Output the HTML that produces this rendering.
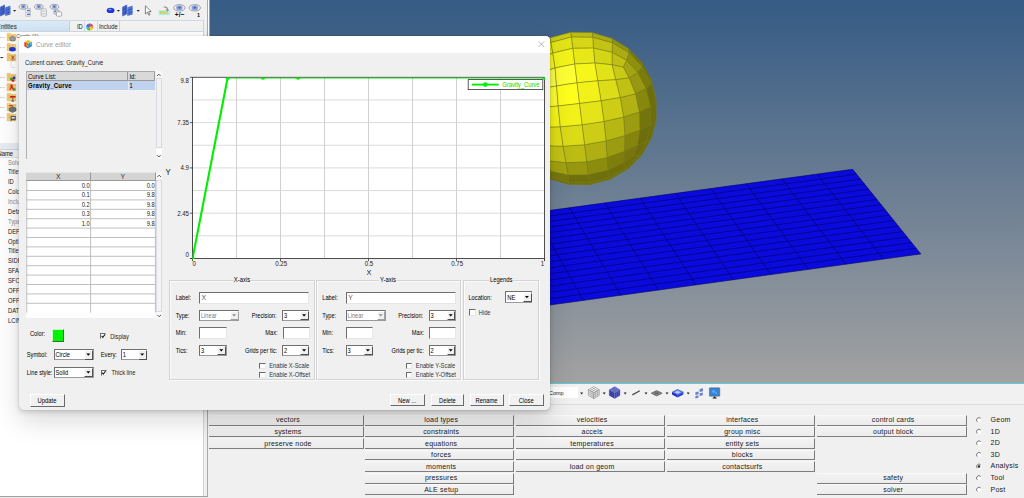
<!DOCTYPE html><html><head><meta charset="utf-8"><title>Curve editor</title><style>
html,body{margin:0;padding:0;}
body{width:1024px;height:498px;overflow:hidden;position:relative;background:#f0f0f0;font-family:"Liberation Sans",sans-serif;}
.t{position:absolute;white-space:nowrap;line-height:12px;font-family:"Liberation Sans",sans-serif;transform:scaleY(1.1);}
div{box-sizing:border-box;}
#root{position:absolute;left:0;top:0;width:1024px;height:498px;overflow:hidden;background:#f0f0f0;}
svg{position:absolute;left:0;top:0;overflow:visible;}
.btn{position:absolute;background:#f1f1f1;border-top:1px solid #fdfdfd;border-left:1px solid #fdfdfd;border-right:1.1px solid #6a6a6a;border-bottom:1.2px solid #6a6a6a;}
.pb{position:absolute;background:linear-gradient(#f3f3f3,#ececec);border-right:1px solid #7a7a7a;border-bottom:1.4px solid #7e7e7e;border-top:1px solid #f8f8f8;}
.inp{position:absolute;background:#fff;border-top:1px solid #6e6e6e;border-left:1px solid #6e6e6e;border-right:1px solid #e6e6e6;border-bottom:1px solid #e6e6e6;}
.grp{position:absolute;border:1px solid #d3d3d3;box-shadow:inset 1px 1px 0 #fbfbfb, 1px 1px 0 #fbfbfb;}
</style></head><body><div id="root"><div style="position:absolute;left:210.00px;top:0.00px;width:814.00px;height:383.00px;background:linear-gradient(to bottom,#375c85 0%,#375c85 2%,#a2a2a2 100%);"></div><svg width="1024" height="498" viewBox="0 0 1024 498"><polygon points="852.7,169.3 920.8,253.9 470.8,315.9 427.9,227.0" fill="#0a0adc"/><path d="M852.7,169.3L920.8,253.9M817.3,174.1L883.3,259.1M781.9,178.9L845.8,264.2M746.5,183.7L808.3,269.4M711.1,188.5L770.8,274.6M675.7,193.4L733.3,279.8M640.3,198.2L695.8,284.9M604.9,203.0L658.3,290.1M569.5,207.8L620.8,295.3M534.1,212.6L583.3,300.4M498.7,217.4L545.8,305.6M463.3,222.2L508.3,310.8M427.9,227.0L470.8,315.9M852.7,169.3L427.9,227.0M856.6,174.2L430.4,232.2M860.6,179.1L432.9,237.4M864.6,184.1L435.4,242.6M868.7,189.2L438.0,247.9M872.8,194.3L440.6,253.3M877.0,199.4L443.2,258.7M881.2,204.6L445.8,264.2M885.4,209.9L448.5,269.7M889.7,215.2L451.2,275.3M894.0,220.6L453.9,280.9M898.3,226.0L456.7,286.6M902.8,231.5L459.4,292.4M907.2,237.0L462.2,298.2M911.7,242.6L465.1,304.0M916.2,248.2L467.9,310.0M920.8,253.9L470.8,315.9" stroke="#04045e" stroke-width="0.6" fill="none"/><g stroke="#7a7a12" stroke-width="0.5" stroke-linejoin="round"><polygon points="504.5,96.5 504.4,115.4 505.0,120.1 505.1,101.1" fill="rgb(175,175,19)"/><polygon points="650.9,78.5 655.6,96.9 656.2,101.6 651.5,83.1" fill="rgb(109,109,11)"/><polygon points="509.5,78.3 504.5,96.5 505.1,101.1 510.0,82.7" fill="rgb(193,193,21)"/><polygon points="641.7,62.1 650.9,78.5 651.5,83.1 642.2,66.5" fill="rgb(109,109,11)"/><polygon points="568.4,184.4 589.7,184.8 589.4,182.8 568.8,182.6" fill="rgb(111,111,12)"/><polygon points="589.7,184.8 610.2,179.3 609.4,177.6 589.4,182.8" fill="rgb(111,111,12)"/><polygon points="548.6,178.6 568.4,184.4 568.8,182.6 550.1,177.4" fill="rgb(111,111,12)"/><polygon points="610.2,179.3 628.0,168.9 626.2,168.0 609.4,177.6" fill="rgb(111,111,12)"/><polygon points="532.0,168.4 548.6,178.6 550.1,177.4 535.4,168.7" fill="rgb(111,111,12)"/><polygon points="628.0,168.9 641.7,155.0 638.4,156.0 626.2,168.0" fill="rgb(111,111,12)"/><polygon points="518.9,62.0 509.5,78.3 510.0,82.7 519.4,66.3" fill="rgb(205,205,22)"/><polygon points="628.6,48.6 641.7,62.1 642.2,66.5 629.1,52.8" fill="rgb(118,118,13)"/><polygon points="518.9,154.9 532.0,168.4 535.4,168.7 524.3,156.9" fill="rgb(134,134,14)"/><polygon points="651.1,138.7 641.7,155.0 638.4,156.0 646.3,142.0" fill="rgb(109,109,11)"/><polygon points="518.9,62.0 532.6,48.1 533.1,52.6 519.4,66.3" fill="rgb(206,206,22)"/><polygon points="612.0,38.4 628.6,48.6 629.1,52.8 612.5,42.9" fill="rgb(147,147,16)"/><polygon points="509.7,138.5 518.9,154.9 524.3,156.9 516.1,141.7" fill="rgb(159,159,17)"/><polygon points="656.1,120.5 651.1,138.7 646.3,142.0 650.6,125.2" fill="rgb(109,109,11)"/><polygon points="532.6,48.1 550.4,37.7 550.9,42.5 533.1,52.6" fill="rgb(207,207,22)"/><polygon points="592.2,32.6 612.0,38.4 612.5,42.9 592.8,37.3" fill="rgb(169,169,18)"/><polygon points="550.4,37.7 570.9,32.2 571.5,37.1 550.9,42.5" fill="rgb(200,200,22)"/><polygon points="570.9,32.2 592.2,32.6 592.8,37.3 571.5,37.1" fill="rgb(187,187,20)"/><polygon points="505.0,120.1 509.7,138.5 516.1,141.7 511.7,123.8" fill="rgb(183,183,20)"/><polygon points="656.2,101.6 656.1,120.5 650.6,125.2 650.5,106.8" fill="rgb(109,109,11)"/><polygon points="505.1,101.1 505.0,120.1 511.7,123.8 511.6,105.1" fill="rgb(204,204,22)"/><polygon points="651.5,83.1 656.2,101.6 650.5,106.8 646.1,88.6" fill="rgb(109,109,11)"/><polygon points="535.4,168.7 550.1,177.4 550.8,171.3 539.4,166.7" fill="rgb(130,130,14)"/><polygon points="626.2,168.0 638.4,156.0 634.0,155.1 624.1,162.3" fill="rgb(111,111,12)"/><polygon points="510.0,82.7 505.1,101.1 511.6,105.1 515.8,87.5" fill="rgb(219,219,24)"/><polygon points="524.3,156.9 535.4,168.7 539.4,166.7 533.7,158.0" fill="rgb(157,157,17)"/><polygon points="642.2,66.5 651.5,83.1 646.1,88.6 637.8,72.5" fill="rgb(124,124,13)"/><polygon points="646.3,142.0 638.4,156.0 634.0,155.1 637.4,145.2" fill="rgb(109,109,11)"/><polygon points="550.1,177.4 568.8,182.6 568.3,175.0 550.8,171.3" fill="rgb(120,120,13)"/><polygon points="609.4,177.6 626.2,168.0 624.1,162.3 608.0,170.1" fill="rgb(111,111,12)"/><polygon points="568.8,182.6 589.4,182.8 588.4,174.8 568.3,175.0" fill="rgb(111,111,12)"/><polygon points="589.4,182.8 609.4,177.6 608.0,170.1 588.4,174.8" fill="rgb(111,111,12)"/><polygon points="519.4,66.3 510.0,82.7 515.8,87.5 523.6,72.9" fill="rgb(230,230,25)"/><polygon points="629.1,52.8 642.2,66.5 637.8,72.5 626.6,60.2" fill="rgb(144,144,15)"/><polygon points="519.4,66.3 533.1,52.6 535.9,61.7 523.6,72.9" fill="rgb(230,230,25)"/><polygon points="612.5,42.9 629.1,52.8 626.6,60.2 612.0,52.3" fill="rgb(172,172,18)"/><polygon points="516.1,141.7 524.3,156.9 533.7,158.0 527.6,143.8" fill="rgb(181,181,19)"/><polygon points="650.6,125.2 646.3,142.0 637.4,145.2 639.9,130.0" fill="rgb(109,109,11)"/><polygon points="533.1,52.6 550.9,42.5 552.8,53.1 535.9,61.7" fill="rgb(232,232,25)"/><polygon points="592.8,37.3 612.5,42.9 612.0,52.3 593.4,48.1" fill="rgb(195,195,21)"/><polygon points="533.7,158.0 547.7,160.7 550.8,171.3 539.4,166.7" fill="rgb(167,167,18)"/><polygon points="624.5,151.3 637.4,145.2 634.0,155.1 624.1,162.3" fill="rgb(117,117,12)"/><polygon points="550.9,42.5 571.5,37.1 572.9,48.3 552.8,53.1" fill="rgb(227,227,25)"/><polygon points="571.5,37.1 592.8,37.3 593.4,48.1 572.9,48.3" fill="rgb(215,215,23)"/><polygon points="511.7,123.8 516.1,141.7 527.6,143.8 523.7,126.2" fill="rgb(205,205,22)"/><polygon points="650.5,106.8 650.6,125.2 639.9,130.0 639.4,112.0" fill="rgb(116,116,12)"/><polygon points="511.6,105.1 511.7,123.8 523.7,126.2 523.1,107.6" fill="rgb(226,226,24)"/><polygon points="646.1,88.6 650.5,106.8 639.4,112.0 635.5,93.8" fill="rgb(135,135,14)"/><polygon points="547.7,160.7 566.1,162.6 568.3,175.0 550.8,171.3" fill="rgb(162,162,17)"/><polygon points="607.1,157.6 624.5,151.3 624.1,162.3 608.0,170.1" fill="rgb(126,126,13)"/><polygon points="515.8,87.5 511.6,105.1 523.1,107.6 525.4,90.6" fill="rgb(239,239,26)"/><polygon points="637.8,72.5 646.1,88.6 635.5,93.8 629.2,77.9" fill="rgb(151,151,16)"/><polygon points="523.6,72.9 515.8,87.5 525.4,90.6 528.6,78.8" fill="rgb(245,245,26)"/><polygon points="626.6,60.2 637.8,72.5 629.2,77.9 623.2,67.2" fill="rgb(164,164,18)"/><polygon points="527.6,143.8 543.5,145.6 547.7,160.7 533.7,158.0" fill="rgb(193,193,21)"/><polygon points="624.9,135.6 639.9,130.0 637.4,145.2 624.5,151.3" fill="rgb(133,133,14)"/><polygon points="566.1,162.6 586.8,161.8 588.4,174.8 568.3,175.0" fill="rgb(152,152,16)"/><polygon points="586.8,161.8 607.1,157.6 608.0,170.1 588.4,174.8" fill="rgb(140,140,15)"/><polygon points="523.6,72.9 535.9,61.7 538.8,73.7 528.6,78.8" fill="rgb(244,244,26)"/><polygon points="612.0,52.3 626.6,60.2 623.2,67.2 612.0,64.7" fill="rgb(191,191,21)"/><polygon points="535.9,61.7 552.8,53.1 555.1,67.9 538.8,73.7" fill="rgb(248,248,31)"/><polygon points="593.4,48.1 612.0,52.3 612.0,64.7 594.8,63.0" fill="rgb(213,213,23)"/><polygon points="523.7,126.2 540.3,127.2 543.5,145.6 527.6,143.8" fill="rgb(219,219,24)"/><polygon points="623.6,117.0 639.4,112.0 639.9,130.0 624.9,135.6" fill="rgb(156,156,17)"/><polygon points="552.8,53.1 572.9,48.3 574.8,64.0 555.1,67.9" fill="rgb(244,244,26)"/><polygon points="572.9,48.3 593.4,48.1 594.8,63.0 574.8,64.0" fill="rgb(232,232,25)"/><polygon points="528.6,78.8 538.8,73.7 538.9,89.1 525.4,90.6" fill="rgb(255,255,41)"/><polygon points="612.0,64.7 623.2,67.2 629.2,77.9 615.7,79.7" fill="rgb(202,202,22)"/><polygon points="543.5,145.6 563.1,146.2 566.1,162.6 547.7,160.7" fill="rgb(195,195,21)"/><polygon points="606.0,140.9 624.9,135.6 624.5,151.3 607.1,157.6" fill="rgb(156,156,17)"/><polygon points="523.1,107.6 538.8,107.6 540.3,127.2 523.7,126.2" fill="rgb(240,240,26)"/><polygon points="620.2,97.6 635.5,93.8 639.4,112.0 623.6,117.0" fill="rgb(177,177,19)"/><polygon points="525.4,90.6 538.9,89.1 538.8,107.6 523.1,107.6" fill="rgb(252,252,27)"/><polygon points="615.7,79.7 629.2,77.9 635.5,93.8 620.2,97.6" fill="rgb(192,192,21)"/><polygon points="563.1,146.2 584.7,144.7 586.8,161.8 566.1,162.6" fill="rgb(188,188,20)"/><polygon points="584.7,144.7 606.0,140.9 607.1,157.6 586.8,161.8" fill="rgb(175,175,19)"/><polygon points="538.8,73.7 555.1,67.9 556.6,85.9 538.9,89.1" fill="rgb(255,255,72)"/><polygon points="594.8,63.0 612.0,64.7 615.7,79.7 597.7,80.8" fill="rgb(226,226,24)"/><polygon points="540.3,127.2 560.3,126.8 563.1,146.2 543.5,145.6" fill="rgb(224,224,24)"/><polygon points="604.0,121.4 623.6,117.0 624.9,135.6 606.0,140.9" fill="rgb(183,183,20)"/><polygon points="555.1,67.9 574.8,64.0 577.1,82.8 556.6,85.9" fill="rgb(255,255,53)"/><polygon points="574.8,64.0 594.8,63.0 597.7,80.8 577.1,82.8" fill="rgb(246,246,27)"/><polygon points="538.9,89.1 556.6,85.9 558.2,106.0 538.8,107.6" fill="rgb(255,255,50)"/><polygon points="597.7,80.8 615.7,79.7 620.2,97.6 601.0,100.8" fill="rgb(220,220,24)"/><polygon points="538.8,107.6 558.2,106.0 560.3,126.8 540.3,127.2" fill="rgb(246,246,27)"/><polygon points="601.0,100.8 620.2,97.6 623.6,117.0 604.0,121.4" fill="rgb(205,205,22)"/><polygon points="560.3,126.8 582.2,124.7 584.7,144.7 563.1,146.2" fill="rgb(219,219,24)"/><polygon points="582.2,124.7 604.0,121.4 606.0,140.9 584.7,144.7" fill="rgb(205,205,22)"/><polygon points="556.6,85.9 577.1,82.8 579.6,103.5 558.2,106.0" fill="rgb(255,255,30)"/><polygon points="577.1,82.8 597.7,80.8 601.0,100.8 579.6,103.5" fill="rgb(242,242,26)"/><polygon points="558.2,106.0 579.6,103.5 582.2,124.7 560.3,126.8" fill="rgb(242,242,26)"/><polygon points="579.6,103.5 601.0,100.8 604.0,121.4 582.2,124.7" fill="rgb(228,228,25)"/></g></svg><div style="position:absolute;left:0.00px;top:0.00px;width:208.00px;height:498.00px;background:#f0f0f0;"></div><svg width="1024" height="498"><polygon points="0.0,7.0 5.0,4.5 5.0,14.0 0.0,16.5" fill="#4f6fd0"/><polygon points="5.0,7.5 10.5,5.5 10.5,14.5 5.0,16.0" fill="#5b86e6"/><path d="M1.7,6.2V15.8M3.4,5.3V15.0M7.0,6.8V15.4M8.8,6.2V15.0M0.0,10.0L5.0,7.8M0.0,13.2L5.0,11.0M5.0,10.5L10.5,8.8M5.0,13.3L10.5,11.8" stroke="#2a3f9a" stroke-width="0.5" fill="none"/><polygon points="13.0,9.9 16.2,9.9 14.6,11.8" fill="#222"/><ellipse cx="23.4" cy="6.8" rx="4.3" ry="2.4" fill="#eef0f6" stroke="#8c8c90" stroke-width="0.8"/><ellipse cx="23.4" cy="6.7" rx="2.52" ry="1.92" fill="#8da4e2"/><circle cx="23.4" cy="6.6" r="0.91" fill="#4a62b4"/><ellipse cx="38.8" cy="6.8" rx="4.3" ry="2.4" fill="#eef0f6" stroke="#8c8c90" stroke-width="0.8"/><ellipse cx="38.8" cy="6.7" rx="2.52" ry="1.92" fill="#8da4e2"/><circle cx="38.8" cy="6.6" r="0.91" fill="#4a62b4"/><ellipse cx="54.4" cy="6.8" rx="4.3" ry="2.4" fill="#eef0f6" stroke="#8c8c90" stroke-width="0.8"/><ellipse cx="54.4" cy="6.7" rx="2.52" ry="1.92" fill="#8da4e2"/><circle cx="54.4" cy="6.6" r="0.91" fill="#4a62b4"/><path d="M25.8,8.6h4.6v7.6h-4.6z" stroke="#9a9ea6" stroke-width="0.6" fill="#fff"/><rect x="27.0" y="9.8" width="3.0" height="1.5" fill="#4a76e6"/><rect x="27.0" y="13.6" width="3.0" height="1.5" fill="#4a76e6"/><path d="M25.8,12.4h4.6" stroke="#9a9ea6" stroke-width="0.5"/><rect x="41.2" y="8.8" width="5.2" height="7.4" rx="1.2" fill="#fafafa" stroke="#8c9098" stroke-width="0.6"/><path d="M42.2,11.2h3.2M42.2,13.8h3.2" stroke="#8a8e96" stroke-width="0.7"/><rect x="54.0" y="10.0" width="5.0" height="4.2" rx="0.8" fill="#e8ecf6" stroke="#7a808a" stroke-width="0.6"/><rect x="56.4" y="11.8" width="5.2" height="4.4" rx="1.0" fill="#fafafa" stroke="#7a808a" stroke-width="0.6"/><rect x="54.6" y="10.8" width="1.6" height="1.4" fill="#4a66d0"/><ellipse cx="110.6" cy="10.4" rx="3.9" ry="2.7" fill="#1f35d8"/><ellipse cx="110.0" cy="9.6" rx="1.6" ry="0.8" fill="#7f95ff"/><polygon points="116.80000000000001,9.9 120.0,9.9 118.4,11.8" fill="#222"/><polygon points="122.2,7.0 127.2,4.5 127.2,14.0 122.2,16.5" fill="#4f6fd0"/><polygon points="127.2,7.5 132.7,5.5 132.7,14.5 127.2,16.0" fill="#5b86e6"/><path d="M123.9,6.2V15.8M125.60000000000001,5.3V15.0M129.2,6.8V15.4M131.0,6.2V15.0M122.2,10.0L127.2,7.8M122.2,13.2L127.2,11.0M127.2,10.5L132.7,8.8M127.2,13.3L132.7,11.8" stroke="#2a3f9a" stroke-width="0.5" fill="none"/><polygon points="136.6,9.9 139.79999999999998,9.9 138.2,11.8" fill="#222"/><path d="M145.4,5.8v8.2l2.0,-1.8l1.4,3.0l1.2,-0.5l-1.4,-3.0l2.6,-0.2z" fill="#fff" stroke="#333" stroke-width="0.6" stroke-linejoin="round"/><rect x="158.4" y="10.2" width="11.4" height="5.0" fill="#aeeee6"/><path d="M163.6,6.6c2.6,-0.6 4.4,0.6 4.4,3.0l1.4,-0.2l-2,2.2l-1.8,-2.0l1.2,-0.1c0,-1.4 -1.2,-2.2 -3.2,-1.9z" fill="#8d8d8d"/><ellipse cx="179.4" cy="7.8" rx="5.7" ry="3.2" fill="#eef0f6" stroke="#8c8c90" stroke-width="0.8"/><ellipse cx="179.4" cy="7.7" rx="3.36" ry="2.56" fill="#8da4e2"/><circle cx="179.4" cy="7.6" r="1.22" fill="#4a62b4"/><ellipse cx="194.8" cy="7.8" rx="5.7" ry="3.2" fill="#eef0f6" stroke="#8c8c90" stroke-width="0.8"/><ellipse cx="194.8" cy="7.7" rx="3.36" ry="2.56" fill="#8da4e2"/><circle cx="194.8" cy="7.6" r="1.22" fill="#4a62b4"/></svg><div class="t" style="top:6.80px;font-size:3.6px;color:#e8c020;font-weight:bold;left:14.10px;width:300px;text-align:center;">NNN</div><div class="t" style="top:9.00px;font-size:6.6px;color:#111;font-weight:bold;left:29.60px;width:300px;text-align:center;">+/&minus;</div><div class="t" style="top:8.80px;font-size:5.4px;color:#111;font-weight:bold;left:48.40px;width:300px;text-align:center;">1</div><div style="position:absolute;left:0.00px;top:20.20px;width:203.60px;height:11.60px;background:#f2f2f2;border-top:1px solid #d0d8e2;border-bottom:1px solid #d0d8e2;"></div><div style="position:absolute;left:0.00px;top:20.60px;width:70.40px;height:10.80px;background:linear-gradient(#dbeaf8,#cfe2f4);border-right:1px solid #c3d0de;"></div><div style="position:absolute;left:84.00px;top:20.60px;width:1.00px;height:10.80px;background:#d5dce5;"></div><div style="position:absolute;left:96.60px;top:20.60px;width:1.00px;height:10.80px;background:#d5dce5;"></div><div style="position:absolute;left:118.60px;top:20.60px;width:1.00px;height:10.80px;background:#c9d3df;"></div><div style="position:absolute;left:203.00px;top:20.60px;width:1.00px;height:10.80px;background:#c9d3df;"></div><div class="t" style="top:20.90px;font-size:6.1px;color:#333;left:-3.20px;-webkit-text-stroke:0.08px #333;">Entities</div><div class="t" style="top:20.90px;font-size:5.8px;color:#222;left:77.00px;">ID</div><div class="t" style="top:20.90px;font-size:5.8px;color:#222;left:99.00px;">Include</div><svg width="1024" height="498"><path d="M89.8,27.0L91.10,23.64A3.6,3.6 0 0 1 93.24,25.93Z" fill="#e23a2e"/><path d="M89.8,27.0L93.24,25.93A3.6,3.6 0 0 1 92.78,29.02Z" fill="#f0a020"/><path d="M89.8,27.0L92.78,29.02A3.6,3.6 0 0 1 90.08,30.59Z" fill="#e8e020"/><path d="M89.8,27.0L90.08,30.59A3.6,3.6 0 0 1 87.17,29.46Z" fill="#38c838"/><path d="M89.8,27.0L87.17,29.46A3.6,3.6 0 0 1 86.24,26.47Z" fill="#30b8d8"/><path d="M89.8,27.0L86.24,26.47A3.6,3.6 0 0 1 87.99,23.89Z" fill="#3850e0"/><path d="M89.8,27.0L87.99,23.89A3.6,3.6 0 0 1 91.10,23.64Z" fill="#9a40d0"/></svg><div style="position:absolute;left:0.00px;top:32.40px;width:203.60px;height:110.40px;background:#fff;"></div><svg width="1024" height="498"><path d="M0,37.6H5.2" stroke="#9a9a9a" stroke-width="0.7" stroke-dasharray="0.8,0.8"/><path d="M0,47.6H5.2" stroke="#9a9a9a" stroke-width="0.7" stroke-dasharray="0.8,0.8"/><path d="M0,57.6H5.2" stroke="#9a9a9a" stroke-width="0.7" stroke-dasharray="0.8,0.8"/><path d="M0,77.6H5.2" stroke="#9a9a9a" stroke-width="0.7" stroke-dasharray="0.8,0.8"/><path d="M0,87.6H5.2" stroke="#9a9a9a" stroke-width="0.7" stroke-dasharray="0.8,0.8"/><path d="M0,97.6H5.2" stroke="#9a9a9a" stroke-width="0.7" stroke-dasharray="0.8,0.8"/><path d="M0,107.6H5.2" stroke="#9a9a9a" stroke-width="0.7" stroke-dasharray="0.8,0.8"/><path d="M0,117.6H5.2" stroke="#9a9a9a" stroke-width="0.7" stroke-dasharray="0.8,0.8"/><path d="M0.6,57.6h2.2" stroke="#222" stroke-width="1"/><path d="M7.2,33.400000000000006h3.2l0.8,1h4.6v6.4h-8.6z" fill="#f6d273" stroke="#dba544" stroke-width="0.45"/><path d="M8.4,35.800000000000004h2M11.600000000000001,35.800000000000004h2M8.4,37.800000000000004h2M11.600000000000001,37.800000000000004h2" stroke="#e8983a" stroke-width="0.7"/><path d="M7.2,43.400000000000006h3.2l0.8,1h4.6v6.4h-8.6z" fill="#f6d273" stroke="#dba544" stroke-width="0.45"/><path d="M8.4,45.800000000000004h2M11.600000000000001,45.800000000000004h2M8.4,47.800000000000004h2M11.600000000000001,47.800000000000004h2" stroke="#e8983a" stroke-width="0.7"/><path d="M7.2,53.400000000000006h3.2l0.8,1h4.6v6.4h-8.6z" fill="#f6d273" stroke="#dba544" stroke-width="0.45"/><path d="M8.4,55.800000000000004h2M11.600000000000001,55.800000000000004h2M8.4,57.800000000000004h2M11.600000000000001,57.800000000000004h2" stroke="#e8983a" stroke-width="0.7"/><path d="M7.2,73.4h3.2l0.8,1h4.6v6.4h-8.6z" fill="#f6d273" stroke="#dba544" stroke-width="0.45"/><path d="M8.4,75.8h2M11.600000000000001,75.8h2M8.4,77.8h2M11.600000000000001,77.8h2" stroke="#e8983a" stroke-width="0.7"/><path d="M7.2,83.4h3.2l0.8,1h4.6v6.4h-8.6z" fill="#f6d273" stroke="#dba544" stroke-width="0.45"/><path d="M8.4,85.8h2M11.600000000000001,85.8h2M8.4,87.8h2M11.600000000000001,87.8h2" stroke="#e8983a" stroke-width="0.7"/><path d="M7.2,93.4h3.2l0.8,1h4.6v6.4h-8.6z" fill="#f6d273" stroke="#dba544" stroke-width="0.45"/><path d="M8.4,95.8h2M11.600000000000001,95.8h2M8.4,97.8h2M11.600000000000001,97.8h2" stroke="#e8983a" stroke-width="0.7"/><path d="M7.2,103.4h3.2l0.8,1h4.6v6.4h-8.6z" fill="#f6d273" stroke="#dba544" stroke-width="0.45"/><path d="M8.4,105.8h2M11.600000000000001,105.8h2M8.4,107.8h2M11.600000000000001,107.8h2" stroke="#e8983a" stroke-width="0.7"/><path d="M7.2,113.4h3.2l0.8,1h4.6v6.4h-8.6z" fill="#f6d273" stroke="#dba544" stroke-width="0.45"/><path d="M8.4,115.8h2M11.600000000000001,115.8h2M8.4,117.8h2M11.600000000000001,117.8h2" stroke="#e8983a" stroke-width="0.7"/><ellipse cx="12.6" cy="38.8" rx="2.8" ry="2.3" fill="#9aa0a8" stroke="#555" stroke-width="0.5"/><ellipse cx="12.4" cy="49.2" rx="3.3" ry="2.2" fill="#2038d8"/><path d="M11.2,55.6l3.6,4.2M14.6,55.6l-3.6,4.2" stroke="#d04020" stroke-width="0.8"/><path d="M12.8,56v5" stroke="#444" stroke-width="0.5"/><circle cx="11.4" cy="79.0" r="1.5" fill="#20b020"/><circle cx="14.0" cy="78.0" r="1.4" fill="#2038d8"/><circle cx="13.0" cy="80.6" r="1.4" fill="#e02020"/><path d="M10.4,84.6h2.2v2.4l1.6,2.8h-1.6l-1,-1.8l-1,1.8h-1.4l1.4,-2.8z" fill="#e02020"/><rect x="13.0" y="88.4" width="2.4" height="2.0" fill="#20a020"/><rect x="10.0" y="96.0" width="5.6" height="1.6" fill="#d02020"/><path d="M12.8,97.6v3.6M11.4,101.2h2.8" stroke="#333" stroke-width="0.7"/><path d="M9.2,108.4l3.2,-1.8l3.6,1.8v2.4l-3.6,1.8l-3.2,-1.8z" fill="#70767e" stroke="#3a3a3a" stroke-width="0.5"/><path d="M9.2,105.6h3.4" stroke="#d02020" stroke-width="1"/><rect x="10.6" y="116.0" width="5.2" height="4.2" rx="0.6" fill="#5a5a5a"/><rect x="11.6" y="117.0" width="3.2" height="1.6" fill="#e8e8e8"/><path d="M10.4,121.2l1.4,-1" stroke="#444" stroke-width="0.6"/><path d="M11.0,62v5.4h4" stroke="#aab" stroke-width="0.6" fill="none" stroke-dasharray="0.8,0.8"/></svg><div class="t" style="top:29.60px;font-size:5.4px;color:#555;left:16.20px;">Cards (1)</div><div style="position:absolute;left:0.00px;top:142.80px;width:203.60px;height:6.20px;background:#e9edf2;"></div><div style="position:absolute;left:0.00px;top:148.80px;width:203.60px;height:9.00px;background:#f3f4f6;border-top:1px solid #cfd7e1;border-bottom:1px solid #dde2e8;"></div><div style="position:absolute;left:0.00px;top:157.80px;width:203.60px;height:338.60px;background:#fff;"></div><div class="t" style="top:147.70px;font-size:5.9px;color:#222;left:-2.60px;-webkit-text-stroke:0.06px #222;">Name</div><div class="t" style="top:156.60px;font-size:5.8px;color:#8a8a8a;left:8.00px;">Solv</div><div class="t" style="top:166.47px;font-size:5.8px;color:#2c2c2c;left:8.00px;">Title</div><div class="t" style="top:176.34px;font-size:5.8px;color:#222;left:8.00px;">ID</div><div class="t" style="top:186.21px;font-size:5.8px;color:#222;left:8.00px;">Colo</div><div class="t" style="top:196.08px;font-size:5.8px;color:#8a8a8a;left:8.00px;">Inclu</div><div class="t" style="top:205.95px;font-size:5.8px;color:#222;left:8.00px;">Defa</div><div class="t" style="top:215.82px;font-size:5.8px;color:#8a8a8a;left:8.00px;">Type</div><div class="t" style="top:225.69px;font-size:5.8px;color:#222;left:8.00px;">DEF</div><div class="t" style="top:235.56px;font-size:5.8px;color:#222;left:8.00px;">Opti</div><div class="t" style="top:245.43px;font-size:5.8px;color:#2c2c2c;left:8.00px;">Title</div><div class="t" style="top:255.30px;font-size:5.8px;color:#222;left:8.00px;">SIDF</div><div class="t" style="top:265.17px;font-size:5.8px;color:#222;left:8.00px;">SFA</div><div class="t" style="top:275.04px;font-size:5.8px;color:#222;left:8.00px;">SFO</div><div class="t" style="top:284.91px;font-size:5.8px;color:#222;left:8.00px;">OFF</div><div class="t" style="top:294.78px;font-size:5.8px;color:#222;left:8.00px;">OFF</div><div class="t" style="top:304.65px;font-size:5.8px;color:#222;left:8.00px;">DAT</div><div class="t" style="top:314.52px;font-size:5.8px;color:#222;left:8.00px;">LCIN</div><div style="position:absolute;left:203.40px;top:32.00px;width:0.90px;height:465.00px;background:#d0d4da;"></div><div style="position:absolute;left:207.00px;top:0.00px;width:1.00px;height:498.00px;background:#a9a9a9;"></div><div style="position:absolute;left:208.00px;top:0.00px;width:1.20px;height:383.40px;background:#fbfbfb;"></div><div style="position:absolute;left:209.00px;top:0.00px;width:1.00px;height:383.40px;background:#3fc7d6;"></div><div style="position:absolute;left:0.00px;top:496.20px;width:1024.00px;height:1.00px;background:#a3a3a3;"></div><div style="position:absolute;left:0.00px;top:497.20px;width:1024.00px;height:0.80px;background:#e6e6e6;"></div><div style="position:absolute;left:208.00px;top:383.00px;width:816.00px;height:115.00px;background:#f0f0f0;"></div><div style="position:absolute;left:208.00px;top:383.40px;width:816.00px;height:1.00px;background:#54cfdc;"></div><div style="position:absolute;left:208.00px;top:384.40px;width:816.00px;height:20.00px;background:#f1f1f1;"></div><div style="position:absolute;left:208.00px;top:404.20px;width:816.00px;height:0.90px;background:#dcdcdc;"></div><div style="position:absolute;left:545.00px;top:387.00px;width:32.60px;height:10.80px;background:#fff;"></div><div class="t" style="top:387.20px;font-size:5.4px;color:#222;left:549.00px;">Comp</div><svg width="1024" height="498"><polygon points="580.1,392.59999999999997 583.1,392.59999999999997 581.6,394.4" fill="#222"/><polygon points="593.8,386.6 599.1999999999999,389.78000000000003 593.8,392.96000000000004 588.4,389.78000000000003" fill="#ffffff" stroke="#555" stroke-width="0.42"/><polygon points="588.4,389.78000000000003 593.8,392.96000000000004 593.8,398.6 588.4,395.42" fill="#fdfdfd" stroke="#555" stroke-width="0.42"/><polygon points="599.1999999999999,389.78000000000003 593.8,392.96000000000004 593.8,398.6 599.1999999999999,395.42" fill="#f8f8f8" stroke="#555" stroke-width="0.42"/><path d="M590.20,390.84v5.64M597.40,390.84v5.64M588.4,391.66L593.8,394.84L599.1999999999999,391.66M590.20,388.72l5.4,3.1799999999999997M597.40,388.72l-5.4,3.1799999999999997M592.00,391.90v5.64M595.60,391.90v5.64M588.4,393.54L593.8,396.72L599.1999999999999,393.54M592.00,387.66l5.4,3.1799999999999997M595.60,387.66l-5.4,3.1799999999999997" stroke="#555" stroke-width="0.34" fill="none"/><polygon points="602.7,392.59999999999997 605.7,392.59999999999997 604.2,394.4" fill="#222"/><polygon points="614.6,386.6 620.0,389.78000000000003 614.6,392.96000000000004 609.2,389.78000000000003" fill="#5c64c2" stroke="#8088dc" stroke-width="0.42"/><polygon points="609.2,389.78000000000003 614.6,392.96000000000004 614.6,398.6 609.2,395.42" fill="#1e2278" stroke="#8088dc" stroke-width="0.42"/><polygon points="620.0,389.78000000000003 614.6,392.96000000000004 614.6,398.6 620.0,395.42" fill="#2c3296" stroke="#8088dc" stroke-width="0.42"/><path d="M611.00,390.84v5.64M618.20,390.84v5.64M609.2,391.66L614.6,394.84L620.0,391.66M611.00,388.72l5.4,3.1799999999999997M618.20,388.72l-5.4,3.1799999999999997M612.80,391.90v5.64M616.40,391.90v5.64M609.2,393.54L614.6,396.72L620.0,393.54M612.80,387.66l5.4,3.1799999999999997M616.40,387.66l-5.4,3.1799999999999997" stroke="#8088dc" stroke-width="0.34" fill="none"/><polygon points="623.7,392.59999999999997 626.7,392.59999999999997 625.2,394.4" fill="#222"/><path d="M632.4,394.9L639.8,390.8" stroke="#4a4a4a" stroke-width="1.3"/><polygon points="644.5,392.59999999999997 647.5,392.59999999999997 646.0,394.4" fill="#222"/><polygon points="651.2,393.2 656.6,390.6 662.2,393.2 656.6,396.0" fill="#8a8a8a" stroke="#3a3a3a" stroke-width="0.5"/><path d="M653.9,391.9l5.5,2.7M659.4,391.9l-5.5,2.7" stroke="#3a3a3a" stroke-width="0.4"/><polygon points="665.5,392.59999999999997 668.5,392.59999999999997 667.0,394.4" fill="#222"/><polygon points="672.0,392.2 677.6,389.4 683.4,392.2 677.6,395.2" fill="#5a86f0" stroke="#1a2a9a" stroke-width="0.5"/><polygon points="674.6,392.2 677.6,390.7 680.8,392.2 677.6,393.8" fill="#b8d0ff"/><polygon points="672.0,392.2 677.6,395.2 677.6,397.4 672.0,394.4" fill="#1a2ab8"/><polygon points="683.4,392.2 677.6,395.2 677.6,397.4 683.4,394.4" fill="#2a3ed0"/><polygon points="686.7,392.59999999999997 689.7,392.59999999999997 688.2,394.4" fill="#222"/><g fill="#6c82c6"><polygon points="695.4,392.2 698.6,391.4 698.6,394.2 695.4,395.0"/><polygon points="699.6,389.0 703.0,388.2 703.0,391.2 699.6,392.0"/><polygon points="695.4,396.0 698.4,395.2 698.4,397.8 695.4,398.4"/><polygon points="699.6,393.2 702.8,392.4 702.8,395.2 699.6,396.0"/></g><rect x="709.4" y="387.8" width="10.4" height="8.4" rx="0.5" fill="#4a7ab0" stroke="#4a6888" stroke-width="0.5"/><rect x="710.6" y="389.0" width="8.0" height="6.0" fill="#2f86e4"/><circle cx="713.6" cy="391.6" r="1.3" fill="#6ec4f4" opacity="0.8"/><circle cx="716.2" cy="393.0" r="1.0" fill="#6ec4f4" opacity="0.6"/><path d="M713.2,398.0l1.4,-1.8l1.4,1.8z" fill="#111"/><path d="M712.6,398.2h4.2" stroke="#111" stroke-width="0.7"/></svg><div class="pb" style="left:209.00px;top:414.80px;width:155.00px;height:10.9px;"></div><div class="t" style="top:414.30px;font-size:7.0px;color:#1a1a1a;letter-spacing:0.2px;left:138.00px;width:300px;text-align:center;transform:none;">vectors</div><div class="pb" style="left:209.00px;top:426.40px;width:155.00px;height:10.9px;"></div><div class="t" style="top:425.90px;font-size:7.0px;color:#1a1a1a;letter-spacing:0.2px;left:138.00px;width:300px;text-align:center;transform:none;">systems</div><div class="pb" style="left:209.00px;top:438.00px;width:155.00px;height:10.9px;"></div><div class="t" style="top:437.50px;font-size:7.0px;color:#1a1a1a;letter-spacing:0.2px;left:138.00px;width:300px;text-align:center;transform:none;">preserve node</div><div class="pb" style="left:365.20px;top:414.80px;width:149.00px;height:10.9px;"></div><div class="t" style="top:414.30px;font-size:7.0px;color:#1a1a1a;letter-spacing:0.2px;left:291.20px;width:300px;text-align:center;transform:none;">load types</div><div class="pb" style="left:365.20px;top:426.40px;width:149.00px;height:10.9px;"></div><div class="t" style="top:425.90px;font-size:7.0px;color:#1a1a1a;letter-spacing:0.2px;left:291.20px;width:300px;text-align:center;transform:none;">constraints</div><div class="pb" style="left:365.20px;top:438.00px;width:149.00px;height:10.9px;"></div><div class="t" style="top:437.50px;font-size:7.0px;color:#1a1a1a;letter-spacing:0.2px;left:291.20px;width:300px;text-align:center;transform:none;">equations</div><div class="pb" style="left:365.20px;top:449.60px;width:149.00px;height:10.9px;"></div><div class="t" style="top:449.10px;font-size:7.0px;color:#1a1a1a;letter-spacing:0.2px;left:291.20px;width:300px;text-align:center;transform:none;">forces</div><div class="pb" style="left:365.20px;top:461.20px;width:149.00px;height:10.9px;"></div><div class="t" style="top:460.70px;font-size:7.0px;color:#1a1a1a;letter-spacing:0.2px;left:291.20px;width:300px;text-align:center;transform:none;">moments</div><div class="pb" style="left:365.20px;top:472.80px;width:149.00px;height:10.9px;"></div><div class="t" style="top:472.30px;font-size:7.0px;color:#1a1a1a;letter-spacing:0.2px;left:291.20px;width:300px;text-align:center;transform:none;">pressures</div><div class="pb" style="left:365.20px;top:484.40px;width:149.00px;height:10.9px;"></div><div class="t" style="top:483.90px;font-size:7.0px;color:#1a1a1a;letter-spacing:0.2px;left:291.20px;width:300px;text-align:center;transform:none;">ALE setup</div><div class="pb" style="left:516.00px;top:414.80px;width:149.20px;height:10.9px;"></div><div class="t" style="top:414.30px;font-size:7.0px;color:#1a1a1a;letter-spacing:0.2px;left:442.10px;width:300px;text-align:center;transform:none;">velocities</div><div class="pb" style="left:516.00px;top:426.40px;width:149.20px;height:10.9px;"></div><div class="t" style="top:425.90px;font-size:7.0px;color:#1a1a1a;letter-spacing:0.2px;left:442.10px;width:300px;text-align:center;transform:none;">accels</div><div class="pb" style="left:516.00px;top:438.00px;width:149.20px;height:10.9px;"></div><div class="t" style="top:437.50px;font-size:7.0px;color:#1a1a1a;letter-spacing:0.2px;left:442.10px;width:300px;text-align:center;transform:none;">temperatures</div><div class="pb" style="left:516.00px;top:449.60px;width:149.20px;height:10.9px;"></div><div class="pb" style="left:516.00px;top:461.20px;width:149.20px;height:10.9px;"></div><div class="t" style="top:460.70px;font-size:7.0px;color:#1a1a1a;letter-spacing:0.2px;left:442.10px;width:300px;text-align:center;transform:none;">load on geom</div><div class="pb" style="left:666.80px;top:414.80px;width:148.20px;height:10.9px;"></div><div class="t" style="top:414.30px;font-size:7.0px;color:#1a1a1a;letter-spacing:0.2px;left:592.40px;width:300px;text-align:center;transform:none;">interfaces</div><div class="pb" style="left:666.80px;top:426.40px;width:148.20px;height:10.9px;"></div><div class="t" style="top:425.90px;font-size:7.0px;color:#1a1a1a;letter-spacing:0.2px;left:592.40px;width:300px;text-align:center;transform:none;">group misc</div><div class="pb" style="left:666.80px;top:438.00px;width:148.20px;height:10.9px;"></div><div class="t" style="top:437.50px;font-size:7.0px;color:#1a1a1a;letter-spacing:0.2px;left:592.40px;width:300px;text-align:center;transform:none;">entity sets</div><div class="pb" style="left:666.80px;top:449.60px;width:148.20px;height:10.9px;"></div><div class="t" style="top:449.10px;font-size:7.0px;color:#1a1a1a;letter-spacing:0.2px;left:592.40px;width:300px;text-align:center;transform:none;">blocks</div><div class="pb" style="left:666.80px;top:461.20px;width:148.20px;height:10.9px;"></div><div class="t" style="top:460.70px;font-size:7.0px;color:#1a1a1a;letter-spacing:0.2px;left:592.40px;width:300px;text-align:center;transform:none;">contactsurfs</div><div class="pb" style="left:816.60px;top:414.80px;width:150.20px;height:10.9px;"></div><div class="t" style="top:414.30px;font-size:7.0px;color:#1a1a1a;letter-spacing:0.2px;left:743.20px;width:300px;text-align:center;transform:none;">control cards</div><div class="pb" style="left:816.60px;top:426.40px;width:150.20px;height:10.9px;"></div><div class="t" style="top:425.90px;font-size:7.0px;color:#1a1a1a;letter-spacing:0.2px;left:743.20px;width:300px;text-align:center;transform:none;">output block</div><div class="pb" style="left:816.60px;top:472.80px;width:150.20px;height:10.9px;"></div><div class="t" style="top:472.30px;font-size:7.0px;color:#1a1a1a;letter-spacing:0.2px;left:743.20px;width:300px;text-align:center;transform:none;">safety</div><div class="pb" style="left:816.60px;top:484.40px;width:150.20px;height:10.9px;"></div><div class="t" style="top:483.90px;font-size:7.0px;color:#1a1a1a;letter-spacing:0.2px;left:743.20px;width:300px;text-align:center;transform:none;">solver</div><svg width="1024" height="498"><circle cx="979.0" cy="420.1" r="2.4" fill="#fff"/><path d="M980.70,418.40A2.4,2.4 0 1 0 977.30,421.80" stroke="#555" stroke-width="0.8" fill="none"/><circle cx="979.0" cy="431.7" r="2.4" fill="#fff"/><path d="M980.70,430.00A2.4,2.4 0 1 0 977.30,433.40" stroke="#555" stroke-width="0.8" fill="none"/><circle cx="979.0" cy="443.3" r="2.4" fill="#fff"/><path d="M980.70,441.60A2.4,2.4 0 1 0 977.30,445.00" stroke="#555" stroke-width="0.8" fill="none"/><circle cx="979.0" cy="454.9" r="2.4" fill="#fff"/><path d="M980.70,453.20A2.4,2.4 0 1 0 977.30,456.60" stroke="#555" stroke-width="0.8" fill="none"/><circle cx="979.0" cy="466.5" r="2.4" fill="#fff"/><path d="M980.70,464.80A2.4,2.4 0 1 0 977.30,468.20" stroke="#555" stroke-width="0.8" fill="none"/><circle cx="979.0" cy="466.5" r="1.2" fill="#222"/><circle cx="979.0" cy="478.1" r="2.4" fill="#fff"/><path d="M980.70,476.40A2.4,2.4 0 1 0 977.30,479.80" stroke="#555" stroke-width="0.8" fill="none"/><circle cx="979.0" cy="489.7" r="2.4" fill="#fff"/><path d="M980.70,488.00A2.4,2.4 0 1 0 977.30,491.40" stroke="#555" stroke-width="0.8" fill="none"/></svg><div class="t" style="top:413.90px;font-size:7.05px;color:#1a1a1a;letter-spacing:0.2px;left:990.60px;transform:none;">Geom</div><div class="t" style="top:425.50px;font-size:7.05px;color:#1a1a1a;letter-spacing:0.2px;left:990.60px;transform:none;">1D</div><div class="t" style="top:437.10px;font-size:7.05px;color:#1a1a1a;letter-spacing:0.2px;left:990.60px;transform:none;">2D</div><div class="t" style="top:448.70px;font-size:7.05px;color:#1a1a1a;letter-spacing:0.2px;left:990.60px;transform:none;">3D</div><div class="t" style="top:460.30px;font-size:7.05px;color:#1a1a1a;letter-spacing:0.2px;left:990.60px;transform:none;">Analysis</div><div class="t" style="top:471.90px;font-size:7.05px;color:#1a1a1a;letter-spacing:0.2px;left:990.60px;transform:none;">Tool</div><div class="t" style="top:483.50px;font-size:7.05px;color:#1a1a1a;letter-spacing:0.2px;left:990.60px;transform:none;">Post</div><div style="position:absolute;left:19.40px;top:36.00px;width:530.20px;height:374.20px;background:#f0f0f0;border-radius:4.5px;box-shadow:0 11px 26px 0 rgba(0,0,0,0.15), 0 2px 5px rgba(0,0,0,0.15), 0 0 1px rgba(0,0,0,0.35);overflow:hidden;"><div style="position:absolute;left:0.00px;top:0.00px;width:531.00px;height:17.20px;background:#fff;"></div></div><svg width="1024" height="498"><polygon points="28.1,39.900000000000006 31.900000000000002,42.0 28.1,43.800000000000004 24.3,42.0" fill="#e9c12a"/><polygon points="24.3,42.0 28.1,43.800000000000004 28.1,48.5 24.3,46.2" fill="#d8412f"/><polygon points="31.900000000000002,42.0 28.1,43.800000000000004 28.1,48.5 31.900000000000002,46.2" fill="#2c8fd6"/><polygon points="26.200000000000003,44.0 28.1,44.900000000000006 28.1,47.0 26.200000000000003,46.0" fill="#f2a230"/><polygon points="30.0,43.0 31.700000000000003,42.2 31.700000000000003,44.400000000000006 30.0,45.2" fill="#45c2c9"/></svg><div class="t" style="top:38.50px;font-size:6.45px;color:#9c9c9c;left:36.00px;">Curve editor</div><svg width="1024" height="498"><path d="M538.6,41.4L544.2,47.0M544.2,41.4L538.6,47.0" stroke="#9a9a9a" stroke-width="0.7" fill="none"/></svg><div class="t" style="top:57.10px;font-size:5.8px;color:#222;left:25.00px;">Current curves: Gravity_Curve</div><div style="position:absolute;left:26.20px;top:71.20px;width:128.80px;height:88.00px;background:#f0f0f0;border-top:1px solid #aaa;border-left:1px solid #b2b2b2;"></div><div style="position:absolute;left:27.20px;top:72.20px;width:100.60px;height:9.00px;background:#d9d9d9;border-bottom:1px solid #9a9a9a;border-right:1px solid #9a9a9a;"></div><div style="position:absolute;left:127.80px;top:72.20px;width:27.20px;height:9.00px;background:#d9d9d9;border-bottom:1px solid #9a9a9a;border-right:1px solid #9a9a9a;"></div><div class="t" style="top:70.90px;font-size:5.9px;color:#000;left:28.00px;">Curve List:</div><div class="t" style="top:70.90px;font-size:5.9px;color:#000;left:129.40px;">Id:</div><div style="position:absolute;left:27.20px;top:81.40px;width:127.40px;height:8.20px;background:#bfd2ee;"></div><div style="position:absolute;left:127.60px;top:81.40px;width:0.80px;height:8.20px;background:#e8eefa;"></div><div class="t" style="top:80.10px;font-size:6.0px;color:#000;font-weight:bold;letter-spacing:0.22px;left:28.00px;">Gravity_Curve</div><div class="t" style="top:80.10px;font-size:5.8px;color:#000;left:129.60px;">1</div><div style="position:absolute;left:155.60px;top:71.20px;width:6.60px;height:88.00px;background:#f7f7f7;"></div><div style="position:absolute;left:155.80px;top:78.40px;width:6.00px;height:70.00px;background:#f2f2f2;border:1px solid #d8dce2;"></div><div style="position:absolute;left:155.60px;top:148.60px;width:6.60px;height:5.00px;background:#fff;"></div><svg width="1024" height="498"><path d="M157.0,76.0L158.8,74.2L160.6,76.0M157.0,155.2L158.8,157.0L160.6,155.2" stroke="#444" stroke-width="0.9" fill="none"/></svg><div style="position:absolute;left:26.40px;top:181.10px;width:129.20px;height:131.60px;background:#fff;"></div><div style="position:absolute;left:26.40px;top:172.00px;width:64.20px;height:9.10px;background:#d4d4d4;border-bottom:1.2px solid #999;border-right:1px solid #999;border-top:1px solid #e6e6e6;"></div><div style="position:absolute;left:90.60px;top:172.00px;width:65.00px;height:9.10px;background:#d4d4d4;border-bottom:1.2px solid #999;border-right:1px solid #999;border-top:1px solid #e6e6e6;"></div><div class="t" style="top:170.70px;font-size:6.8px;color:#333;left:-91.80px;width:300px;text-align:center;">X</div><div class="t" style="top:170.70px;font-size:6.8px;color:#333;left:-27.20px;width:300px;text-align:center;">Y</div><svg width="1024" height="498"><path d="M26.4,190.50H155.6M26.4,199.90H155.6M26.4,209.30H155.6M26.4,218.70H155.6M26.4,228.10H155.6M26.4,237.50H155.6M26.4,246.90H155.6M26.4,256.30H155.6M26.4,265.70H155.6M26.4,275.10H155.6M26.4,284.50H155.6M26.4,293.90H155.6M26.4,303.30H155.6M26.799999999999997,181.1V312.7M90.6,181.1V312.7M155.4,181.1V312.7" stroke="#b9b9b9" stroke-width="0.9" fill="none"/></svg><div class="t" style="top:180.00px;font-size:5.8px;color:#222;left:-210.30px;width:300px;text-align:right;">0.0</div><div class="t" style="top:180.00px;font-size:5.8px;color:#222;left:-145.30px;width:300px;text-align:right;">0.0</div><div class="t" style="top:189.40px;font-size:5.8px;color:#222;left:-210.30px;width:300px;text-align:right;">0.1</div><div class="t" style="top:189.40px;font-size:5.8px;color:#222;left:-145.30px;width:300px;text-align:right;">9.8</div><div class="t" style="top:198.80px;font-size:5.8px;color:#222;left:-210.30px;width:300px;text-align:right;">0.2</div><div class="t" style="top:198.80px;font-size:5.8px;color:#222;left:-145.30px;width:300px;text-align:right;">9.8</div><div class="t" style="top:208.20px;font-size:5.8px;color:#222;left:-210.30px;width:300px;text-align:right;">0.3</div><div class="t" style="top:208.20px;font-size:5.8px;color:#222;left:-145.30px;width:300px;text-align:right;">9.8</div><div class="t" style="top:217.60px;font-size:5.8px;color:#222;left:-210.30px;width:300px;text-align:right;">1.0</div><div class="t" style="top:217.60px;font-size:5.8px;color:#222;left:-145.30px;width:300px;text-align:right;">9.8</div><div style="position:absolute;left:26.40px;top:312.50px;width:135.60px;height:5.20px;background:#fdfdfd;"></div><div style="position:absolute;left:156.20px;top:172.00px;width:6.20px;height:146.70px;background:#f7f7f7;"></div><div style="position:absolute;left:156.40px;top:179.60px;width:5.80px;height:132.10px;background:#f4f4f4;border:1px solid #d8dce2;"></div><svg width="1024" height="498"><path d="M157.4,177.0L159.2,175.2L161.0,177.0M157.4,314.90L159.2,316.70L161.0,314.90" stroke="#444" stroke-width="0.9" fill="none"/></svg><div style="position:absolute;left:191.50px;top:75.70px;width:353.60px;height:1.20px;background:#fafafa;"></div><div style="position:absolute;left:192.50px;top:77.30px;width:352.00px;height:181.20px;background:#fff;"></div><svg width="1024" height="498"><path d="M236.50,77.3V258.5M280.50,77.3V258.5M324.50,77.3V258.5M368.50,77.3V258.5M412.50,77.3V258.5M456.50,77.3V258.5M500.50,77.3V258.5" stroke="#bcbcbc" stroke-width="0.7" fill="none"/><path d="M192.5,99.95H544.5M192.5,122.60H544.5M192.5,145.25H544.5M192.5,167.90H544.5M192.5,190.55H544.5M192.5,213.20H544.5M192.5,235.85H544.5" stroke="#d2d2d2" stroke-width="0.8" fill="none"/><path d="M192.5,77.0V258.5M190.0,258.5H544.5M544.5,77.3V261.0M192.5,77.3H544.5" stroke="#3a3a3a" stroke-width="0.9" fill="none"/><path d="M189.9,77.30H192.5M189.9,122.60H192.5M189.9,167.90H192.5M189.9,213.20H192.5M189.9,258.50H192.5M192.50,258.5V261.1M280.50,258.5V261.1M368.50,258.5V261.1M456.50,258.5V261.1M544.50,258.5V261.1" stroke="#3a3a3a" stroke-width="0.8" fill="none"/><clipPath id="cp"><rect x="192.5" y="77.8" width="352.6" height="181.1"/></clipPath><g clip-path="url(#cp)"><polyline points="192.50,258.70 227.70,77.50 262.90,77.50 298.10,77.50 544.50,77.50" stroke="#00ee00" stroke-width="2.1" fill="none" stroke-linejoin="round"/><circle cx="192.50" cy="258.70" r="2.2" fill="#00ee00"/><circle cx="227.70" cy="77.50" r="2.2" fill="#00ee00"/><circle cx="262.90" cy="77.50" r="2.2" fill="#00ee00"/><circle cx="298.10" cy="77.50" r="2.2" fill="#00ee00"/><circle cx="544.50" cy="77.50" r="2.2" fill="#00ee00"/></g><rect x="468.2" y="79.6" width="74.59999999999997" height="10.0" fill="#fff" stroke="#333" stroke-width="0.8"/><path d="M472,84.60H498.6" stroke="#00ee00" stroke-width="1.9"/><circle cx="485.3" cy="84.60" r="2.3" fill="#00ee00"/></svg><div class="t" style="top:78.80px;font-size:5.85px;color:#00dd00;left:502.20px;">Gravity_Curve</div><div class="t" style="top:75.30px;font-size:6.1px;color:#222;left:-111.00px;width:300px;text-align:right;">9.8</div><div class="t" style="top:116.90px;font-size:6.1px;color:#222;left:-111.00px;width:300px;text-align:right;">7.35</div><div class="t" style="top:162.20px;font-size:6.1px;color:#222;left:-111.00px;width:300px;text-align:right;">4.9</div><div class="t" style="top:207.50px;font-size:6.1px;color:#222;left:-111.00px;width:300px;text-align:right;">2.45</div><div class="t" style="top:249.10px;font-size:6.1px;color:#222;left:-111.00px;width:300px;text-align:right;">0</div><div class="t" style="top:258.00px;font-size:6.1px;color:#222;left:192.60px;">0</div><div class="t" style="top:258.00px;font-size:6.1px;color:#222;left:131.20px;width:300px;text-align:center;">0.25</div><div class="t" style="top:258.00px;font-size:6.1px;color:#222;left:219.00px;width:300px;text-align:center;">0.5</div><div class="t" style="top:258.00px;font-size:6.1px;color:#222;left:307.20px;width:300px;text-align:center;">0.75</div><div class="t" style="top:258.00px;font-size:6.1px;color:#222;left:244.20px;width:300px;text-align:right;">1</div><div class="t" style="top:266.60px;font-size:7.3px;color:#222;left:219.00px;width:300px;text-align:center;">X</div><div class="t" style="top:166.90px;font-size:7.8px;color:#222;left:165.40px;">Y</div><div class="t" style="top:327.60px;font-size:5.7px;color:#000;left:30.00px;">Color:</div><div style="position:absolute;left:51.80px;top:329.00px;width:12.40px;height:12.80px;background:#00f400;border-right:1px solid #3b6b3b;border-bottom:1px solid #3b6b3b;border-top:1px solid #c8f8c8;border-left:1px solid #c8f8c8;"></div><div style="position:absolute;left:100.10px;top:332.80px;width:6.4px;height:6.4px;background:#fff;border-top:1px solid #6a6a6a;border-left:1px solid #6a6a6a;border-right:1px solid #e8e8e8;border-bottom:1px solid #e8e8e8;"></div><svg width="1024" height="498"><path d="M101.60,335.90L102.80,337.40L105.10,334.40" stroke="#222" stroke-width="1.1" fill="none"/></svg><div class="t" style="top:330.50px;font-size:5.7px;color:#222;left:110.20px;">Display</div><div class="t" style="top:349.20px;font-size:5.7px;color:#000;left:26.80px;">Symbol:</div><div class="inp" style="left:53.60px;top:348.80px;width:40.00px;height:11.40px;border-right-color:#9a9a9a;border-bottom-color:#9a9a9a;"></div><div style="position:absolute;left:84.20px;top:350.00px;width:8.80px;height:9.60px;background:#f0f0f0;border-right:1px solid #505050;border-bottom:1px solid #505050;border-top:1px solid #fff;border-left:1px solid #fff;"></div><svg width="1024" height="498"><polygon points="86.30,353.60 90.30,353.60 88.30,355.70" fill="#000"/></svg><div class="t" style="top:349.20px;font-size:5.7px;color:#000;left:55.50px;">Circle</div><div class="t" style="top:349.20px;font-size:5.7px;color:#000;left:100.80px;">Every:</div><div class="inp" style="left:120.90px;top:348.80px;width:26.60px;height:11.40px;border-right-color:#9a9a9a;border-bottom-color:#9a9a9a;"></div><div style="position:absolute;left:138.10px;top:350.00px;width:8.80px;height:9.60px;background:#f0f0f0;border-right:1px solid #505050;border-bottom:1px solid #505050;border-top:1px solid #fff;border-left:1px solid #fff;"></div><svg width="1024" height="498"><polygon points="140.20,353.60 144.20,353.60 142.20,355.70" fill="#000"/></svg><div class="t" style="top:349.20px;font-size:5.7px;color:#000;left:122.80px;">1</div><div class="t" style="top:366.80px;font-size:5.7px;color:#000;left:26.80px;">Line style:</div><div class="inp" style="left:53.60px;top:366.60px;width:40.00px;height:11.20px;border-right-color:#9a9a9a;border-bottom-color:#9a9a9a;"></div><div style="position:absolute;left:84.20px;top:367.80px;width:8.80px;height:9.40px;background:#f0f0f0;border-right:1px solid #505050;border-bottom:1px solid #505050;border-top:1px solid #fff;border-left:1px solid #fff;"></div><svg width="1024" height="498"><polygon points="86.30,371.30 90.30,371.30 88.30,373.40" fill="#000"/></svg><div class="t" style="top:366.90px;font-size:5.7px;color:#000;left:55.50px;">Solid</div><div style="position:absolute;left:100.60px;top:369.50px;width:6.4px;height:6.4px;background:#fff;border-top:1px solid #6a6a6a;border-left:1px solid #6a6a6a;border-right:1px solid #e8e8e8;border-bottom:1px solid #e8e8e8;"></div><svg width="1024" height="498"><path d="M102.10,372.60L103.30,374.10L105.60,371.10" stroke="#222" stroke-width="1.1" fill="none"/></svg><div class="t" style="top:367.00px;font-size:5.7px;color:#222;left:111.40px;">Thick line</div><div class="btn" style="left:30.00px;top:394.40px;width:34.60px;height:12.20px;"></div><div class="t" style="top:395.10px;font-size:5.85px;color:#000;left:-103.00px;width:300px;text-align:center;">Update</div><div class="grp" style="left:168.90px;top:280.20px;width:145.70px;height:100.00px;"></div><div class="t" style="left:92.0px;width:300px;text-align:center;top:274.4px;font-size:5.9px;color:#000;"><span style="background:#f0f0f0;padding:0 1.0px;">X-axis</span></div><div class="t" style="top:291.80px;font-size:5.7px;color:#000;left:175.70px;">Label:</div><div class="inp" style="left:199.00px;top:291.70px;width:110.40px;height:11.90px;"></div><div class="t" style="top:291.85px;font-size:6.8px;color:#585858;left:201.60px;">X</div><div class="t" style="top:309.60px;font-size:5.7px;color:#000;left:175.70px;">Type:</div><div class="inp" style="left:199.00px;top:309.60px;width:40.40px;height:11.30px;border-right-color:#9a9a9a;border-bottom-color:#9a9a9a;"></div><div style="position:absolute;left:230.00px;top:310.80px;width:8.80px;height:9.50px;background:#f0f0f0;border-right:1px solid #a0a0a0;border-bottom:1px solid #a0a0a0;border-top:1px solid #fff;border-left:1px solid #fff;"></div><svg width="1024" height="498"><polygon points="232.10,314.35 236.10,314.35 234.10,316.45" fill="#8a8a8a"/></svg><div class="t" style="top:309.95px;font-size:5.7px;color:#7c7c7c;left:200.90px;">Linear</div><div class="t" style="top:309.60px;font-size:5.7px;color:#000;left:-23.40px;width:300px;text-align:right;">Precision:</div><div class="inp" style="left:282.00px;top:309.60px;width:27.40px;height:11.30px;border-right-color:#9a9a9a;border-bottom-color:#9a9a9a;"></div><div style="position:absolute;left:300.00px;top:310.80px;width:8.80px;height:9.50px;background:#f0f0f0;border-right:1px solid #505050;border-bottom:1px solid #505050;border-top:1px solid #fff;border-left:1px solid #fff;"></div><svg width="1024" height="498"><polygon points="302.10,314.35 306.10,314.35 304.10,316.45" fill="#000"/></svg><div class="t" style="top:309.95px;font-size:5.7px;color:#000;left:283.90px;">3</div><div class="t" style="top:327.00px;font-size:5.7px;color:#000;left:175.70px;">Min:</div><div class="inp" style="left:199.00px;top:327.30px;width:27.60px;height:11.60px;"></div><div class="t" style="top:327.00px;font-size:5.7px;color:#000;left:-22.40px;width:300px;text-align:right;">Max:</div><div class="inp" style="left:282.60px;top:327.30px;width:27.00px;height:11.60px;"></div><div class="t" style="top:344.60px;font-size:5.7px;color:#000;left:175.70px;">Tics:</div><div class="inp" style="left:199.00px;top:344.60px;width:27.60px;height:11.30px;border-right-color:#9a9a9a;border-bottom-color:#9a9a9a;"></div><div style="position:absolute;left:217.20px;top:345.80px;width:8.80px;height:9.50px;background:#f0f0f0;border-right:1px solid #505050;border-bottom:1px solid #505050;border-top:1px solid #fff;border-left:1px solid #fff;"></div><svg width="1024" height="498"><polygon points="219.30,349.35 223.30,349.35 221.30,351.45" fill="#000"/></svg><div class="t" style="top:344.95px;font-size:5.7px;color:#000;left:200.90px;">3</div><div class="t" style="top:344.60px;font-size:5.7px;color:#000;left:-22.80px;width:300px;text-align:right;">Grids per tic:</div><div class="inp" style="left:282.00px;top:344.60px;width:27.40px;height:11.30px;border-right-color:#9a9a9a;border-bottom-color:#9a9a9a;"></div><div style="position:absolute;left:300.00px;top:345.80px;width:8.80px;height:9.50px;background:#f0f0f0;border-right:1px solid #505050;border-bottom:1px solid #505050;border-top:1px solid #fff;border-left:1px solid #fff;"></div><svg width="1024" height="498"><polygon points="302.10,349.35 306.10,349.35 304.10,351.45" fill="#000"/></svg><div class="t" style="top:344.95px;font-size:5.7px;color:#000;left:283.90px;">2</div><div style="position:absolute;left:259.20px;top:362.60px;width:6.7px;height:6.7px;background:#fff;border-top:1px solid #6a6a6a;border-left:1px solid #6a6a6a;border-right:1px solid #e8e8e8;border-bottom:1px solid #e8e8e8;"></div><div class="t" style="top:360.40px;font-size:5.8px;color:#333;left:269.20px;">Enable X-Scale</div><div style="position:absolute;left:259.20px;top:371.60px;width:6.7px;height:6.7px;background:#fff;border-top:1px solid #6a6a6a;border-left:1px solid #6a6a6a;border-right:1px solid #e8e8e8;border-bottom:1px solid #e8e8e8;"></div><div class="t" style="top:369.40px;font-size:5.8px;color:#333;left:269.20px;">Enable X-Offset</div><div class="grp" style="left:316.00px;top:280.20px;width:145.20px;height:100.00px;"></div><div class="t" style="left:238.0px;width:300px;text-align:center;top:274.4px;font-size:5.9px;color:#000;"><span style="background:#f0f0f0;padding:0 1.0px;">Y-axis</span></div><div class="t" style="top:291.80px;font-size:5.7px;color:#000;left:322.30px;">Label:</div><div class="inp" style="left:345.60px;top:291.70px;width:110.40px;height:11.90px;"></div><div class="t" style="top:291.85px;font-size:6.8px;color:#585858;left:348.20px;">Y</div><div class="t" style="top:309.60px;font-size:5.7px;color:#000;left:322.30px;">Type:</div><div class="inp" style="left:345.60px;top:309.60px;width:40.40px;height:11.30px;border-right-color:#9a9a9a;border-bottom-color:#9a9a9a;"></div><div style="position:absolute;left:376.60px;top:310.80px;width:8.80px;height:9.50px;background:#f0f0f0;border-right:1px solid #a0a0a0;border-bottom:1px solid #a0a0a0;border-top:1px solid #fff;border-left:1px solid #fff;"></div><svg width="1024" height="498"><polygon points="378.70,314.35 382.70,314.35 380.70,316.45" fill="#8a8a8a"/></svg><div class="t" style="top:309.95px;font-size:5.7px;color:#7c7c7c;left:347.50px;">Linear</div><div class="t" style="top:309.60px;font-size:5.7px;color:#000;left:123.20px;width:300px;text-align:right;">Precision:</div><div class="inp" style="left:428.60px;top:309.60px;width:27.40px;height:11.30px;border-right-color:#9a9a9a;border-bottom-color:#9a9a9a;"></div><div style="position:absolute;left:446.60px;top:310.80px;width:8.80px;height:9.50px;background:#f0f0f0;border-right:1px solid #505050;border-bottom:1px solid #505050;border-top:1px solid #fff;border-left:1px solid #fff;"></div><svg width="1024" height="498"><polygon points="448.70,314.35 452.70,314.35 450.70,316.45" fill="#000"/></svg><div class="t" style="top:309.95px;font-size:5.7px;color:#000;left:430.50px;">3</div><div class="t" style="top:327.00px;font-size:5.7px;color:#000;left:322.30px;">Min:</div><div class="inp" style="left:345.60px;top:327.30px;width:27.60px;height:11.60px;"></div><div class="t" style="top:327.00px;font-size:5.7px;color:#000;left:124.20px;width:300px;text-align:right;">Max:</div><div class="inp" style="left:429.20px;top:327.30px;width:27.00px;height:11.60px;"></div><div class="t" style="top:344.60px;font-size:5.7px;color:#000;left:322.30px;">Tics:</div><div class="inp" style="left:345.60px;top:344.60px;width:27.60px;height:11.30px;border-right-color:#9a9a9a;border-bottom-color:#9a9a9a;"></div><div style="position:absolute;left:363.80px;top:345.80px;width:8.80px;height:9.50px;background:#f0f0f0;border-right:1px solid #505050;border-bottom:1px solid #505050;border-top:1px solid #fff;border-left:1px solid #fff;"></div><svg width="1024" height="498"><polygon points="365.90,349.35 369.90,349.35 367.90,351.45" fill="#000"/></svg><div class="t" style="top:344.95px;font-size:5.7px;color:#000;left:347.50px;">3</div><div class="t" style="top:344.60px;font-size:5.7px;color:#000;left:123.80px;width:300px;text-align:right;">Grids per tic:</div><div class="inp" style="left:428.60px;top:344.60px;width:27.40px;height:11.30px;border-right-color:#9a9a9a;border-bottom-color:#9a9a9a;"></div><div style="position:absolute;left:446.60px;top:345.80px;width:8.80px;height:9.50px;background:#f0f0f0;border-right:1px solid #505050;border-bottom:1px solid #505050;border-top:1px solid #fff;border-left:1px solid #fff;"></div><svg width="1024" height="498"><polygon points="448.70,349.35 452.70,349.35 450.70,351.45" fill="#000"/></svg><div class="t" style="top:344.95px;font-size:5.7px;color:#000;left:430.50px;">2</div><div style="position:absolute;left:405.80px;top:362.60px;width:6.7px;height:6.7px;background:#fff;border-top:1px solid #6a6a6a;border-left:1px solid #6a6a6a;border-right:1px solid #e8e8e8;border-bottom:1px solid #e8e8e8;"></div><div class="t" style="top:360.40px;font-size:5.8px;color:#333;left:415.80px;">Enable Y-Scale</div><div style="position:absolute;left:405.80px;top:371.60px;width:6.7px;height:6.7px;background:#fff;border-top:1px solid #6a6a6a;border-left:1px solid #6a6a6a;border-right:1px solid #e8e8e8;border-bottom:1px solid #e8e8e8;"></div><div class="t" style="top:369.40px;font-size:5.8px;color:#333;left:415.80px;">Enable Y-Offset</div><div class="grp" style="left:462.80px;top:280.20px;width:76.40px;height:100.00px;"></div><div class="t" style="left:351.2px;width:300px;text-align:center;top:274.4px;font-size:5.9px;color:#000;"><span style="background:#f0f0f0;padding:0 1.0px;">Legends</span></div><div class="t" style="top:291.80px;font-size:5.75px;color:#000;left:468.40px;">Location:</div><div class="inp" style="left:505.40px;top:291.30px;width:26.80px;height:11.30px;border-right-color:#9a9a9a;border-bottom-color:#9a9a9a;"></div><div style="position:absolute;left:522.80px;top:292.50px;width:8.80px;height:9.50px;background:#f0f0f0;border-right:1px solid #505050;border-bottom:1px solid #505050;border-top:1px solid #fff;border-left:1px solid #fff;"></div><svg width="1024" height="498"><polygon points="524.90,296.05 528.90,296.05 526.90,298.15" fill="#000"/></svg><div class="t" style="top:291.65px;font-size:5.9px;color:#000;left:507.30px;">NE</div><div style="position:absolute;left:469.00px;top:309.20px;width:6.8px;height:6.8px;background:#fff;border-top:1px solid #6a6a6a;border-left:1px solid #6a6a6a;border-right:1px solid #e8e8e8;border-bottom:1px solid #e8e8e8;"></div><div class="t" style="top:307.40px;font-size:5.7px;color:#333;left:478.80px;">Hide</div><div class="btn" style="left:390.40px;top:393.60px;width:34.20px;height:12.60px;"></div><div class="t" style="top:394.50px;font-size:5.85px;color:#000;left:257.20px;width:300px;text-align:center;">New ...</div><div class="btn" style="left:431.40px;top:393.60px;width:32.60px;height:12.60px;"></div><div class="t" style="top:394.50px;font-size:5.85px;color:#000;left:297.40px;width:300px;text-align:center;">Delete</div><div class="btn" style="left:469.60px;top:393.60px;width:34.40px;height:12.60px;"></div><div class="t" style="top:394.50px;font-size:5.85px;color:#000;left:336.50px;width:300px;text-align:center;">Rename</div><div class="btn" style="left:508.80px;top:393.60px;width:35.40px;height:12.60px;"></div><div class="t" style="top:394.50px;font-size:5.85px;color:#000;left:376.20px;width:300px;text-align:center;">Close</div></div></body></html>
